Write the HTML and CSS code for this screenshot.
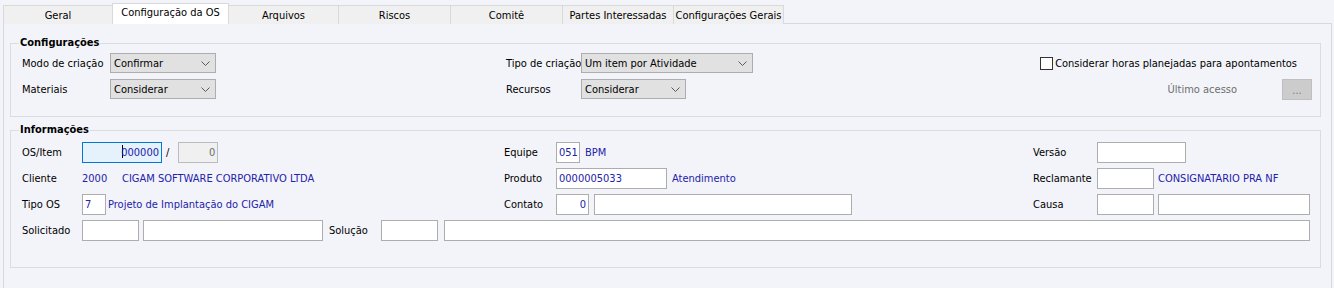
FILE: index.html
```html
<!DOCTYPE html>
<html>
<head>
    <title>Configuração da OS</title>
    <link rel="stylesheet" href="styles.css">
</head>
<body>
    <div class="window">
        <div class="tabs">
            <div class="tab t110">Geral</div>
            <div class="tab active">Configuração da OS</div>
            <div class="tab t111">Arquivos</div>
            <div class="tab t113">Riscos</div>
            <div class="tab t113">Comitê</div>
            <div class="tab t112">Partes Interessadas</div>
            <div class="tab t111">Configurações Gerais</div>
        </div>

        <div class="panel">
            <fieldset class="group group-cfg">
                <legend>Configurações</legend>
                <div class="row">
                    <div class="col-left">
                        <span class="label w88">Modo de criação</span>
                        <div class="select w106">Confirmar<svg class="chev" width="9" height="5" viewBox="0 0 9 5"><polyline points="0.5,0.5 4.5,4.5 8.5,0.5" fill="none" stroke="#5a5a5a" stroke-width="1"/></svg></div>
                    </div>
                    <div class="col-mid">
                        <span class="label w75">Tipo de criação</span>
                        <div class="select w172">Um item por Atividade<svg class="chev" width="9" height="5" viewBox="0 0 9 5"><polyline points="0.5,0.5 4.5,4.5 8.5,0.5" fill="none" stroke="#5a5a5a" stroke-width="1"/></svg></div>
                    </div>
                    <div class="col-right">
                        <label class="check"><span class="box"></span>Considerar horas planejadas para apontamentos</label>
                    </div>
                </div>
                <div class="row">
                    <div class="col-left">
                        <span class="label w88">Materiais</span>
                        <div class="select w106">Considerar<svg class="chev" width="9" height="5" viewBox="0 0 9 5"><polyline points="0.5,0.5 4.5,4.5 8.5,0.5" fill="none" stroke="#5a5a5a" stroke-width="1"/></svg></div>
                    </div>
                    <div class="col-mid">
                        <span class="label w75">Recursos</span>
                        <div class="select w105">Considerar<svg class="chev" width="9" height="5" viewBox="0 0 9 5"><polyline points="0.5,0.5 4.5,4.5 8.5,0.5" fill="none" stroke="#5a5a5a" stroke-width="1"/></svg></div>
                    </div>
                    <div class="col-right">
                        <span class="label muted">Último acesso</span>
                        <div class="dots-btn">...</div>
                    </div>
                </div>
            </fieldset>

            <fieldset class="group group-info">
                <legend>Informações</legend>
                <div class="row">
                    <div class="col-left info">
                        <span class="label w60">OS/Item</span>
                        <div class="input focus w80"><span class="caret"></span>000000</div>
                        <span class="slash">/</span>
                        <div class="input disabled w40 right">0</div>
                    </div>
                    <div class="col-mid info">
                        <span class="label w52">Equipe</span>
                        <div class="input w24 blue">051</div>
                        <span class="value ml5">BPM</span>
                    </div>
                    <div class="col-right info">
                        <span class="label w64">Versão</span>
                        <div class="input w89"></div>
                    </div>
                </div>
                <div class="row">
                    <div class="col-left info">
                        <span class="label w60">Cliente</span>
                        <span class="value w40">2000</span>
                        <span class="value">CIGAM SOFTWARE CORPORATIVO LTDA</span>
                    </div>
                    <div class="col-mid info">
                        <span class="label w52">Produto</span>
                        <div class="input w111 blue">0000005033</div>
                        <span class="value ml5">Atendimento</span>
                    </div>
                    <div class="col-right info">
                        <span class="label w64">Reclamante</span>
                        <div class="input w57"></div>
                        <span class="value ml4">CONSIGNATARIO PRA NF</span>
                    </div>
                </div>
                <div class="row">
                    <div class="col-left info">
                        <span class="label w60">Tipo OS</span>
                        <div class="input w24 blue">7</div>
                        <span class="value ml2">Projeto de Implantação do CIGAM</span>
                    </div>
                    <div class="col-mid info">
                        <span class="label w52">Contato</span>
                        <div class="input w33 blue right">0</div>
                        <div class="input w258 ml5"></div>
                    </div>
                    <div class="col-right info">
                        <span class="label w64">Causa</span>
                        <div class="input w57"></div>
                        <div class="input grow ml4"></div>
                    </div>
                </div>
                <div class="row">
                    <span class="label w60">Solicitado</span>
                    <div class="input w57"></div>
                    <div class="input w180 ml4"></div>
                    <span class="label w52 ml6">Solução</span>
                    <div class="input w57"></div>
                    <div class="input grow ml6"></div>
                </div>
            </fieldset>
        </div>
    </div>
</body>
</html>
```

FILE: styles.css
```css
body {
    margin: 0;
    background: #ffffff;
    font-family: "DejaVu Sans Condensed", "Liberation Sans", sans-serif;
    font-size: 11px;
    color: #000;
}
.window {
    background: #f3f4f9;
    padding: 3px 2px 0 3px;
}
.tabs {
    display: flex;
    align-items: flex-end;
    height: 21px;
    position: relative;
    z-index: 1;
    margin-bottom: -1px;
}
.tab {
    height: 19px;
    line-height: 19px;
    text-align: center;
    background: #f0f0f0;
    border: 1px solid #d9d9d9;
    border-bottom: none;
    margin-right: -1px;
    box-sizing: border-box;
    white-space: nowrap;
}
.t110 { width: 110px; }
.t111 { width: 111px; }
.t112 { width: 112px; }
.t113 { width: 113px; }
.tab.active {
    background: #ffffff;
    height: 21px;
    line-height: 18px;
    width: 117px;
    position: relative;
    z-index: 2;
}
.panel {
    border: 1px solid #d9d9d9;
    border-bottom: none;
    background: #f3f4f9;
    padding: 12px 10px 20px 6px;
}
.group {
    border: 1px solid #dcdcdc;
    margin: 0;
    padding: 0 10px 0 11px;
    min-width: 0;
}
.group legend {
    font-weight: bold;
    padding: 0 1px;
    margin-left: -3px;
    line-height: 14px;
}
.group-cfg {
    padding-top: 3px;
    padding-bottom: 17px;
    padding-right: 8px;
}
.group-info {
    margin-top: 6px;
    padding-top: 5px;
    padding-bottom: 26px;
}
.row {
    display: flex;
    align-items: center;
    height: 20px;
}
.group-cfg .row + .row {
    margin-top: 6px;
}
.group-info .row {
    height: 21px;
}
.group-info .row + .row {
    margin-top: 5px;
}
.col-left {
    display: flex;
    align-items: center;
    width: 484px;
}
.col-left.info {
    width: 482px;
}
.col-mid {
    display: flex;
    align-items: center;
    width: 530px;
}
.col-mid.info {
    width: 529px;
}
.col-right {
    display: flex;
    align-items: center;
    justify-content: flex-end;
    flex: 1;
}
.col-right.info {
    justify-content: flex-start;
}
.label {
    white-space: nowrap;
    flex-shrink: 0;
}
.muted {
    color: #6d6d6d;
}
.value {
    color: #2222aa;
    white-space: nowrap;
}
.select {
    position: relative;
    height: 20px;
    line-height: 19px;
    box-sizing: border-box;
    border: 1px solid #adadad;
    background: #e1e1e1;
    padding-left: 3px;
    flex-shrink: 0;
}
.chev {
    position: absolute;
    right: 5px;
    top: 7px;
}
.check {
    display: flex;
    align-items: center;
    margin-right: 15px;
    white-space: nowrap;
}
.box {
    width: 13px;
    height: 13px;
    box-sizing: border-box;
    border: 1px solid #333;
    background: #ffffff;
    margin-right: 2px;
}
.dots-btn {
    width: 30px;
    height: 21px;
    box-sizing: border-box;
    border: 1px solid #bfbfbf;
    background: #cccccc;
    color: #7a7a7a;
    text-align: center;
    line-height: 22px;
    margin-left: 45px;
}
.input {
    height: 21px;
    line-height: 20px;
    box-sizing: border-box;
    border: 1px solid #adadad;
    background: #ffffff;
    padding: 0 2px;
    flex-shrink: 0;
    white-space: nowrap;
}
.input.blue {
    color: #2222aa;
}
.input.right {
    text-align: right;
}
.input.focus {
    background: #e5f1fb;
    border-color: #0078d7;
    color: #2222aa;
    text-align: right;
}
.caret {
    display: inline-block;
    width: 1px;
    height: 13px;
    background: #000;
    vertical-align: -2px;
    margin-right: -2px;
}
.input.disabled {
    background: #f0f0f0;
    border-color: #bcbcbc;
    color: #6d6d6d;
}
.slash {
    margin: 0 9px 0 4px;
}
.grow {
    flex: 1;
}
.w24 { width: 24px; }
.w33 { width: 33px; }
.w40 { width: 40px; }
.w52 { width: 52px; }
.w57 { width: 57px; }
.w60 { width: 60px; }
.w64 { width: 64px; }
.w75 { width: 75px; }
.w80 { width: 80px; }
.w88 { width: 88px; }
.w89 { width: 89px; }
.w105 { width: 105px; }
.w106 { width: 106px; }
.w111 { width: 111px; }
.w172 { width: 172px; }
.w180 { width: 180px; }
.w258 { width: 258px; }
.ml2 { margin-left: 2px; }
.ml4 { margin-left: 4px; }
.ml5 { margin-left: 5px; }
.ml6 { margin-left: 6px; }
```
